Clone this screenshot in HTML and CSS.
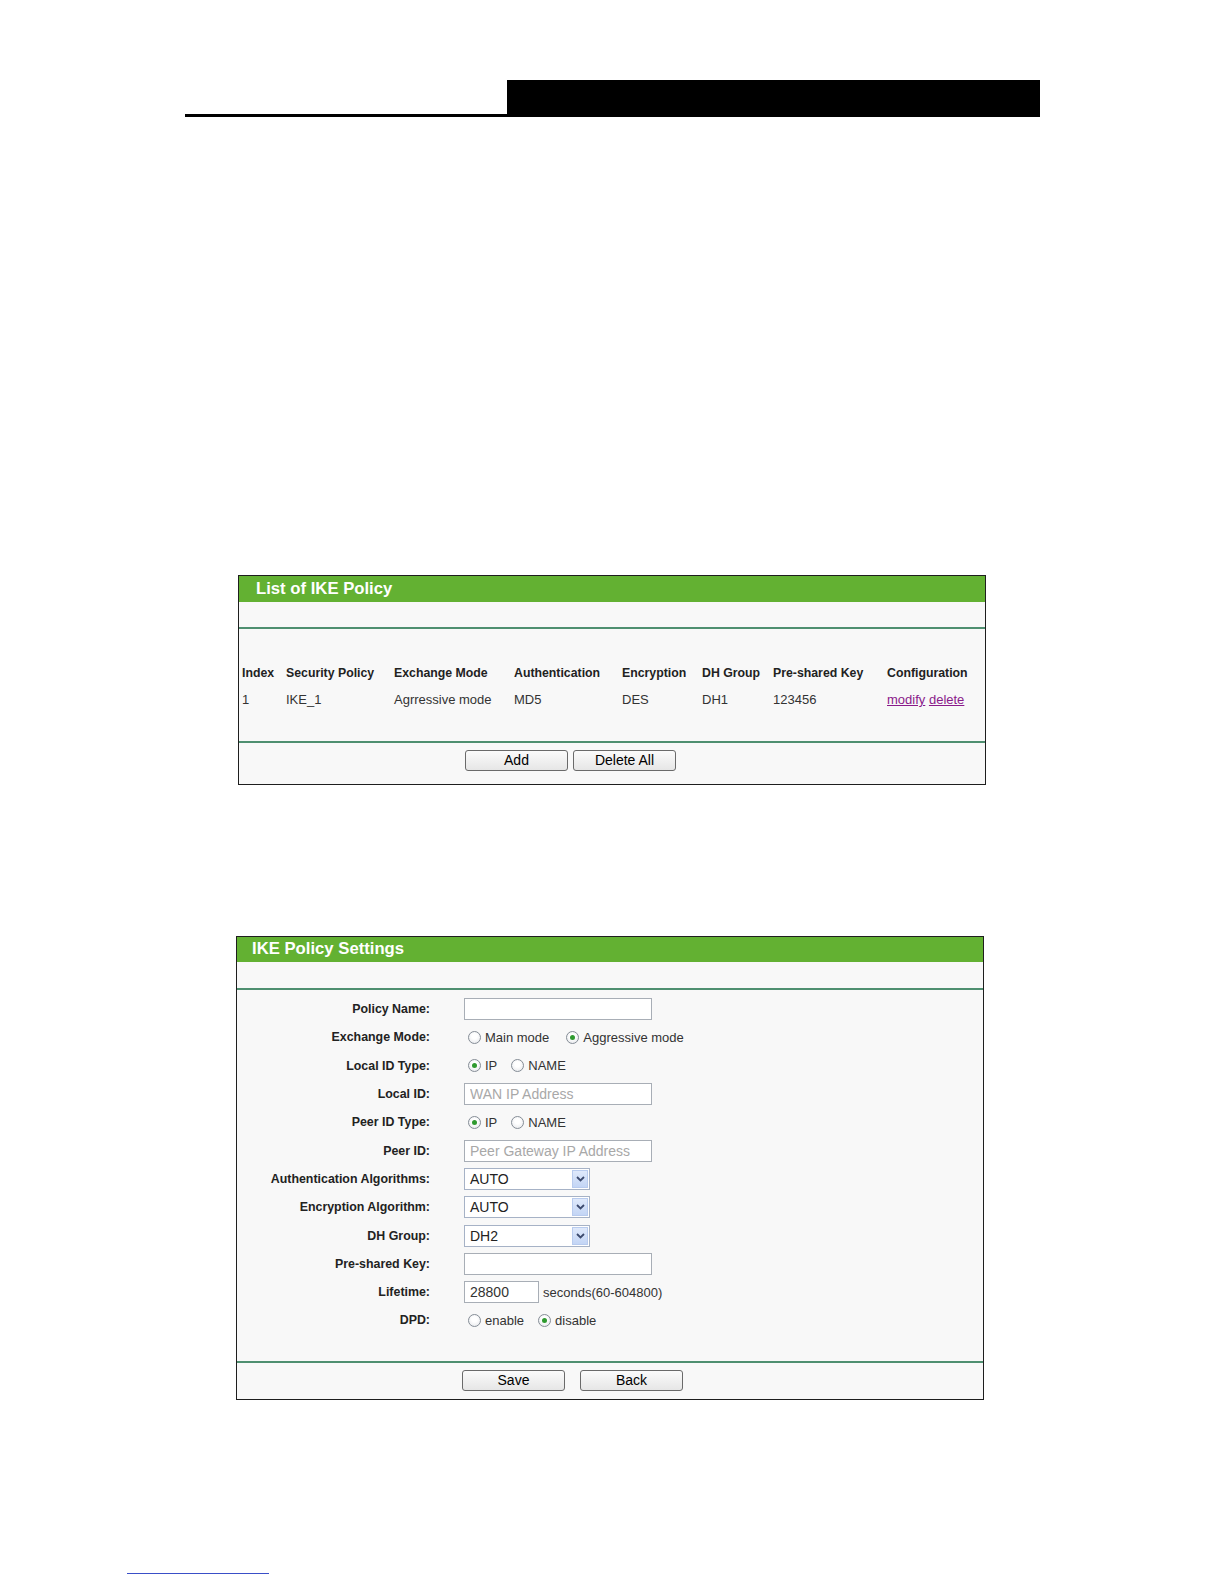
FILE: index.html
```html
<!DOCTYPE html>
<html lang="en">
<head>
<meta charset="utf-8">
<title>IKE Policy</title>
<link rel="stylesheet" href="styles.css">
</head>
<body>
<div class="doc-header">
  <div class="rule"></div>
  <div class="bar"></div>
</div>

<section class="panel panel-list">
  <div class="panel-title">List of IKE Policy</div>
  <div class="panel-gap"></div>
  <div class="sep"></div>
  <div class="list">
    <div class="list-row list-head">
      <span>Index</span><span>Security Policy</span><span>Exchange Mode</span><span>Authentication</span><span>Encryption</span><span>DH Group</span><span>Pre-shared Key</span><span>Configuration</span>
    </div>
    <div class="list-row list-data">
      <span>1</span><span>IKE_1</span><span>Agrressive mode</span><span>MD5</span><span>DES</span><span>DH1</span><span>123456</span><span><a href="#" class="lnk">modify</a> <a href="#" class="lnk">delete</a></span>
    </div>
  </div>
  <div class="sep"></div>
  <div class="btn-row btn-row-list">
    <button class="btn">Add</button>
    <button class="btn">Delete All</button>
  </div>
</section>

<section class="panel panel-form">
  <div class="panel-title title-form">IKE Policy Settings</div>
  <div class="panel-gap gap-form"></div>
  <div class="sep"></div>
  <div class="form">
    <div class="frow"><label>Policy Name:</label><div class="ctl"><input class="txt" type="text"></div></div>
    <div class="frow"><label>Exchange Mode:</label><div class="ctl radios">
      <span class="opt wide"><span class="radio"></span>Main mode</span>
      <span class="opt"><span class="radio on"></span>Aggressive mode</span>
    </div></div>
    <div class="frow"><label>Local ID Type:</label><div class="ctl radios">
      <span class="opt"><span class="radio on"></span>IP</span>
      <span class="opt"><span class="radio"></span>NAME</span>
    </div></div>
    <div class="frow"><label>Local ID:</label><div class="ctl"><input class="txt" type="text" placeholder="WAN IP Address"></div></div>
    <div class="frow"><label>Peer ID Type:</label><div class="ctl radios">
      <span class="opt"><span class="radio on"></span>IP</span>
      <span class="opt"><span class="radio"></span>NAME</span>
    </div></div>
    <div class="frow"><label>Peer ID:</label><div class="ctl"><input class="txt" type="text" placeholder="Peer Gateway IP Address"></div></div>
    <div class="frow"><label>Authentication Algorithms:</label><div class="ctl">
      <div class="sel"><span class="sel-val">AUTO</span><span class="sel-btn"><svg width="9" height="6" viewBox="0 0 9 6"><path d="M1 1 L4.5 4.5 L8 1" fill="none" stroke="#3c4a6e" stroke-width="1.8"/></svg></span></div>
    </div></div>
    <div class="frow"><label>Encryption Algorithm:</label><div class="ctl">
      <div class="sel"><span class="sel-val">AUTO</span><span class="sel-btn"><svg width="9" height="6" viewBox="0 0 9 6"><path d="M1 1 L4.5 4.5 L8 1" fill="none" stroke="#3c4a6e" stroke-width="1.8"/></svg></span></div>
    </div></div>
    <div class="frow"><label>DH Group:</label><div class="ctl">
      <div class="sel"><span class="sel-val">DH2</span><span class="sel-btn"><svg width="9" height="6" viewBox="0 0 9 6"><path d="M1 1 L4.5 4.5 L8 1" fill="none" stroke="#3c4a6e" stroke-width="1.8"/></svg></span></div>
    </div></div>
    <div class="frow"><label>Pre-shared Key:</label><div class="ctl"><input class="txt" type="text"></div></div>
    <div class="frow"><label>Lifetime:</label><div class="ctl"><input class="txt short" type="text" value="28800"><span class="hint">seconds(60-604800)</span></div></div>
    <div class="frow"><label>DPD:</label><div class="ctl radios">
      <span class="opt"><span class="radio"></span>enable</span>
      <span class="opt"><span class="radio on"></span>disable</span>
    </div></div>
  </div>
  <div class="sep"></div>
  <div class="btn-row btn-row-form">
    <button class="btn">Save</button>
    <button class="btn">Back</button>
  </div>
</section>

<div class="foot-line"></div>
</body>
</html>
```
FILE: styles.css
```css
body {
  margin: 0;
  background: #ffffff;
  font-family: "Liberation Sans", Arial, sans-serif;
  color: #333;
}

.doc-header {
  display: flex;
  align-items: flex-end;
  margin: 80px 0 0 185px;
}
.doc-header .rule {
  width: 322px;
  height: 3px;
  background: #000;
}
.doc-header .bar {
  width: 533px;
  height: 37px;
  background: #000;
}

.panel {
  box-sizing: border-box;
  width: 748px;
  border: 1px solid #1e1e1e;
  background: #f8f8f8;
}
.panel-list {
  margin: 458px 0 0 238px;
}
.panel-form {
  margin: 151px 0 0 236px;
}

.panel-title {
  background: #63b132;
  height: 26px;
  line-height: 26px;
  color: #fff;
  font-weight: bold;
  font-size: 16.7px;
  padding-left: 17px;
}
.title-form {
  height: 25px;
  line-height: 24px;
  padding-left: 15px;
}

.panel-gap {
  height: 25px;
}
.gap-form {
  height: 26px;
}

.sep {
  height: 2px;
  background: #4f8f70;
}

.list {
  padding: 36px 0 33px 3px;
}
.list-row {
  display: grid;
  grid-template-columns: 44px 108px 120px 108px 80px 71px 114px 1fr;
  line-height: 16px;
  white-space: nowrap;
}
.list-head {
  font-size: 12.3px;
  font-weight: bold;
  color: #222;
}
.list-data {
  margin-top: 11px;
  font-size: 13px;
  color: #333;
}
.lnk {
  color: #8a1a8a;
  text-decoration: underline;
}

.btn-row {
  display: flex;
}
.btn-row-list {
  padding: 7px 0 13px 226px;
  gap: 5px;
}
.btn-row-form {
  padding: 7px 0 8px 225px;
  gap: 15px;
}
.btn {
  box-sizing: border-box;
  width: 103px;
  height: 21px;
  padding: 0;
  border: 1px solid #6a6a6a;
  border-radius: 3px;
  background: linear-gradient(#fbfbfb, #e6e6e6);
  font-family: "Liberation Sans", Arial, sans-serif;
  font-size: 14px;
  line-height: 19px;
  color: #000;
}

.form {
  padding: 5px 0 26px 0;
}
.frow {
  display: grid;
  grid-template-columns: 193px 1fr;
  column-gap: 34px;
  height: 28.3px;
  align-items: center;
}
.frow label {
  text-align: right;
  font-size: 12.4px;
  font-weight: bold;
  color: #222;
}
.ctl {
  display: flex;
  align-items: center;
}

.txt {
  box-sizing: border-box;
  width: 188px;
  height: 22px;
  margin: 0;
  padding: 0 5px;
  border: 1px solid #a8aeb6;
  background: #fff;
  font-family: "Liberation Sans", Arial, sans-serif;
  font-size: 14px;
  color: #333;
  outline: none;
}
.txt::placeholder {
  color: #a8a8a8;
}
.txt.short {
  width: 75px;
}
.hint {
  margin-left: 4px;
  font-size: 13px;
  color: #333;
}

.sel {
  box-sizing: border-box;
  width: 126px;
  height: 22px;
  border: 1px solid #a6b2c6;
  background: #fff;
  display: flex;
  align-items: center;
  justify-content: space-between;
  padding: 0 1px 0 5px;
}
.sel-val {
  font-size: 14px;
  color: #222;
}
.sel-btn {
  box-sizing: border-box;
  width: 16px;
  height: 18px;
  border: 1px solid #b8cbee;
  background: linear-gradient(#dfe9fb, #c3d5f5);
  display: flex;
  align-items: center;
  justify-content: center;
}

.radios {
  padding-left: 4px;
  font-size: 13px;
  color: #333;
}
.opt {
  display: inline-flex;
  align-items: center;
  margin-right: 14px;
}
.opt.wide {
  margin-right: 17px;
}
.radio {
  box-sizing: border-box;
  width: 13px;
  height: 13px;
  margin-right: 4px;
  border: 1px solid #858d96;
  border-radius: 50%;
  background: radial-gradient(circle at 50% 40%, #ffffff 30%, #e2e4e8 100%);
  display: inline-flex;
  align-items: center;
  justify-content: center;
}
.radio.on::after {
  content: "";
  width: 5px;
  height: 5px;
  border-radius: 50%;
  background: #2f9a2f;
}

.foot-line {
  margin: 173px 0 0 127px;
  width: 142px;
  height: 1px;
  background: #3a4fc8;
}
```
